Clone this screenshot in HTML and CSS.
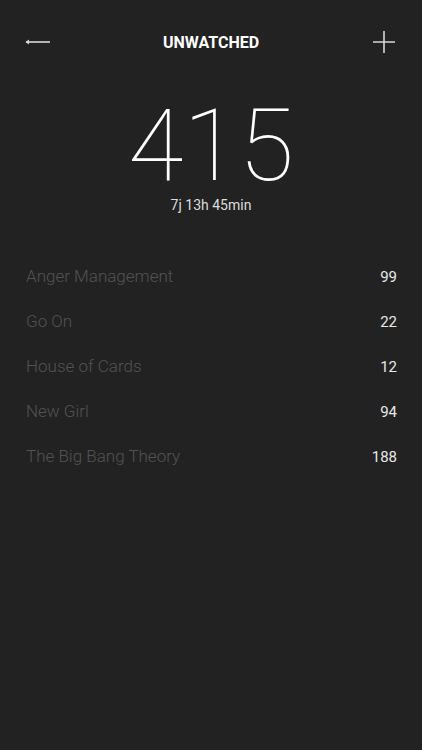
FILE: index.html
```html
<!DOCTYPE html>
<html lang="en">
<head>
  <meta charset="UTF-8">
  <title>Unwatched</title>
  <link rel="stylesheet" href="styles.css">
</head>
<body>

<header class="topbar">
  <a class="icon-btn" href="#">
    <svg width="26" height="10" viewBox="0 0 26 10">
      <path d="M1 5 H25" stroke="#d8d8d8" stroke-width="1.6" fill="none"/>
      <path d="M0.5 5 L4 2.5 V7.5 Z" fill="#d8d8d8"/>
    </svg>
  </a>
  <h1>UNWATCHED</h1>
  <a class="icon-btn" href="#">
    <svg width="22" height="22" viewBox="0 0 22 22">
      <path d="M11 0 V22 M0 11 H22" stroke="#d8d8d8" stroke-width="1.6" fill="none"/>
    </svg>
  </a>
</header>

<section class="total">
  <div class="total-count">415</div>
  <div class="total-time">7j 13h 45min</div>
</section>

<ul class="shows">
  <li><span class="show-name">Anger Management</span><span class="show-count">99</span></li>
  <li><span class="show-name">Go On</span><span class="show-count">22</span></li>
  <li><span class="show-name">House of Cards</span><span class="show-count">12</span></li>
  <li><span class="show-name">New Girl</span><span class="show-count">94</span></li>
  <li><span class="show-name">The Big Bang Theory</span><span class="show-count">188</span></li>
</ul>

</body>
</html>
```

FILE: styles.css
```css
body {
  font-family: 'Roboto', 'Liberation Sans', sans-serif;
  background-color: #222222;
  color: #eeeeee;
  margin: 0;
  padding: 0;
  height: 750px;
}
.topbar {
  display: flex;
  align-items: center;
  justify-content: space-between;
  height: 44px;
  padding: 20px 25px 0 25px;
}
.topbar h1 {
  margin: 0;
  font-size: 16px;
  font-weight: 700;
  color: #ffffff;
}
.icon-btn {
  display: flex;
  align-items: center;
  justify-content: center;
  width: 26px;
  height: 26px;
}
.total {
  text-align: center;
  margin-top: 31px;
}
.total-count {
  font-size: 101px;
  font-weight: 100;
  line-height: 1;
  color: #ffffff;
}
.total-time {
  font-size: 14px;
  font-weight: 400;
  line-height: 1;
  margin-top: 2px;
  color: #dddddd;
}
.shows {
  list-style: none;
  margin: 42px 0 0 0;
  padding: 0 25px 0 26px;
}
.shows li {
  display: flex;
  justify-content: space-between;
  align-items: baseline;
  height: 45px;
  line-height: 45px;
}
.show-name {
  font-size: 17px;
  font-weight: 300;
  color: #525252;
}
.show-count {
  font-size: 15px;
  font-weight: 400;
  color: #e8e8e8;
}
```
